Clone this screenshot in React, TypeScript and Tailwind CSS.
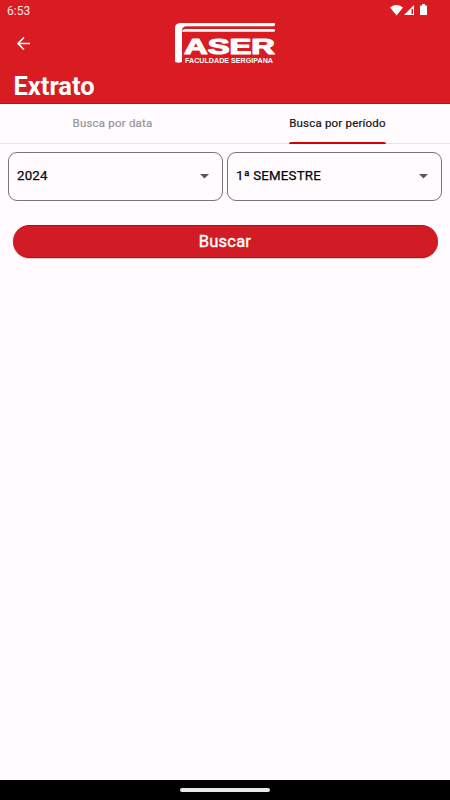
import React from "react";

function Logo() {
  return (
    <svg width="102" height="42" viewBox="0 0 102 42" fill="#fff" className="block">
      <path d="M0 40V6Q0 1 6 1H99Q100.500 1 100 3Q99.600 4.300 98 4.300H11Q7 4.800 7 9V40Q3.500 41.300 0 40Z" />
      <path d="M7 9.800Q7.500 7 11 7H98.500Q100 7 100 8.400Q100 9.800 98.500 9.800Z" />
      <g fontFamily="'Liberation Sans', sans-serif" fontWeight="700">
        <text x="9" y="31.500" fontSize="22" textLength="91" lengthAdjust="spacingAndGlyphs" stroke="#fff" strokeWidth="1.200" strokeLinejoin="round">ASER</text>
        <text x="10" y="40.700" fontSize="7" textLength="88" lengthAdjust="spacingAndGlyphs">FACULDADE SERGIPANA</text>
      </g>
    </svg>
  );
}

function StatusIcons() {
  return (
    <svg width="40" height="14" viewBox="0 0 40 14" fill="#fff" className="block">
      <path d="M0 3.400Q6.500-1.500 13 3.400L6.500 11.500Z" />
      <path fillRule="evenodd" d="M24 1V11H14ZM21.500 5V10H23V5Z" />
      <path d="M32 0H35V1.500H36.500Q37 1.500 37 2V10.500Q37 11 36.500 11H30.500Q30 11 30 10.500V2Q30 1.500 30.500 1.500H32Z" />
    </svg>
  );
}

function Select({ value }: { value: string }) {
  return (
    <button className="flex h-[49px] flex-1 items-center justify-between rounded-[9px] border border-[#77747b] pl-[8px] pr-[13px] text-[13.300px] font-normal tracking-[0.180px] text-[#080608] [-webkit-text-stroke:0.250px]">
      <span className="pb-px">{value}</span>
      <svg width="9" height="5" viewBox="0 0 9 5" fill="#59575b"><path d="M0 0H9L4.500 4.500Z" /></svg>
    </button>
  );
}

export default function App() {
  return (
    <div className="flex h-[800px] w-[450px] flex-col bg-[#fffbff] font-[Roboto,sans-serif]">
      <header className="h-[104px] border-b border-[#cc0710] bg-[#d91b22] text-white">
        <div className="flex h-[22px] items-start justify-between pl-[7px] pr-[20px] pt-[4px]">
          <span className="text-[12px] leading-[14px] text-[#ffe4e4]">6:53</span>
          <StatusIcons />
        </div>
        <div className="grid h-[42px] grid-cols-[175px_102px_1fr]">
          <svg width="14" height="14" viewBox="0 0 14 14" fill="none" stroke="#fff" strokeWidth="1.600" className="ml-[17px] mt-[14px]">
            <path d="M13 7.500H1.500M7 1.500L1 7.500L7 13.500" />
          </svg>
          <Logo />
        </div>
        <h1 className="pl-[13.500px] pt-[7px] text-[25.500px] font-bold leading-[31px]">Extrato</h1>
      </header>
      <nav className="grid h-[40px] grid-cols-2 border-b border-[#e7e3e7] text-[11.500px] font-normal tracking-[0.200px] [-webkit-text-stroke:0.200px]">
        <button className="flex h-[40px] justify-center text-[#969396]"><span className="pt-[11px] leading-[16px]">Busca por data</span></button>
        <button className="flex h-[40px] justify-center text-[#151215]"><span className="flex h-[40px] flex-col justify-between pt-[11px] leading-[16px]">Busca por período<i className="h-[2px] w-full rounded-t-[2px] bg-[#d60000]" /></span></button>
      </nav>
      <main className="flex-1 pt-[8px]">
        <div className="flex gap-[4px] px-[8px]">
          <Select value="2024" />
          <Select value="1ª SEMESTRE" />
        </div>
        <button className="mx-[12.500px] mt-[24px] flex h-[33px] w-[425px] items-center justify-center rounded-full border-y border-[#d1040d] bg-[#d11c26] pt-px text-[16.500px] font-normal tracking-[0.200px] text-white shadow-[0_1px_1px_rgba(0,0,0,0.200)] [-webkit-text-stroke:0.400px]">Buscar</button>
      </main>
      <footer className="flex h-[20px] items-center justify-center bg-black"><div className="h-[4px] w-[90px] rounded-full bg-[#e8e8e8]" /></footer>
    </div>
  );
}
